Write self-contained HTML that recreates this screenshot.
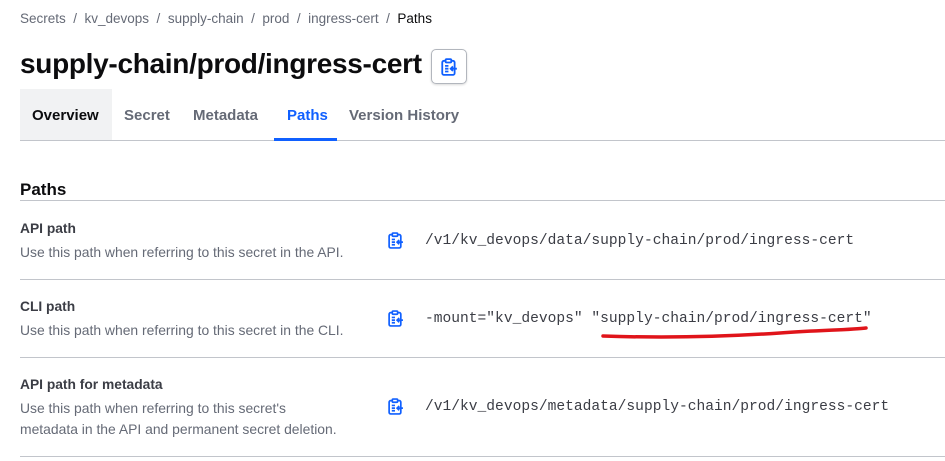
<!DOCTYPE html>
<html><head><meta charset="utf-8"><style>
*{margin:0;padding:0;box-sizing:border-box}
body{width:945px;height:461px;overflow:hidden;background:#fff;font-family:"Liberation Sans",sans-serif;color:#3b3d45;position:relative}
.a{position:absolute;white-space:nowrap}
.bc{top:11px;font-size:13.5px;color:#656a76}
.t{top:48px;left:20px;font-size:28px;font-weight:bold;color:#0c0c0e;letter-spacing:-0.3px}
.btn{left:431px;top:49px;width:36px;height:35px;border:1px solid #b2b6bd;border-radius:5px;box-shadow:0 1px 2px rgba(0,0,0,.15);display:flex;align-items:center;justify-content:center}
.tab{top:107px;font-size:15px;font-weight:bold;color:#656a76}
.line{position:absolute;left:20px;right:0;height:1px;background:#c2c5cb}
.lbl{font-size:13.8px;font-weight:bold;color:#3b3d45}
.d{font-size:13.9px;color:#656a76;line-height:21px}
.m{font-family:"Liberation Mono",monospace;font-size:14.6px;color:#3b3d45}
</style></head><body>
<div class="a bc" style="left:20px">Secrets&nbsp; / &nbsp;kv_devops&nbsp; / &nbsp;supply-chain&nbsp; / &nbsp;prod&nbsp; / &nbsp;ingress-cert&nbsp; / &nbsp;<span style="color:#0c0c0e">Paths</span></div>
<div class="a t">supply-chain/prod/ingress-cert</div>
<div class="a btn"><svg width="18" height="18" viewBox="0 0 16 16" fill="none" stroke="#1060ff" stroke-width="1.6"><rect x="2" y="2.5" width="11" height="12.5" rx="1.5"/><rect x="5" y="1" width="5" height="3" rx=".8" fill="#fff"/><path d="M4.5 7h3M4.5 9.5h3M4.5 12h3M15 9.5H9.5M11.5 7.5l-2 2 2 2"/></svg></div>
<div class="a" style="left:20px;top:89px;width:92px;height:51px;background:#f1f2f3"></div>
<div class="a tab" style="left:32px;color:#0c0c0e">Overview</div>
<div class="a tab" style="left:124px">Secret</div>
<div class="a tab" style="left:193px">Metadata</div>
<div class="a tab" style="left:287px;color:#1060ff">Paths</div>
<div class="a tab" style="left:349px">Version History</div>
<div class="line" style="top:140px"></div>
<div class="a" style="left:274px;top:138px;width:63px;height:3px;background:#1060ff"></div>
<div class="a" style="left:20px;top:180px;font-size:17px;font-weight:bold;color:#0c0c0e">Paths</div>
<div class="line" style="top:200px"></div>

<div class="a lbl" style="left:20px;top:221px">API path</div>
<div class="a d" style="left:20px;top:242px">Use this path when referring to this secret in the API.</div>
<div class="a m" style="left:425px;top:233px">/v1/kv_devops/data/supply-chain/prod/ingress-cert</div>
<div class="line" style="top:279px"></div>

<div class="a lbl" style="left:20px;top:299px">CLI path</div>
<div class="a d" style="left:20px;top:320px">Use this path when referring to this secret in the CLI.</div>
<div class="a m" style="left:425px;top:311px">-mount="kv_devops" "supply-chain/prod/ingress-cert"</div>
<svg class="a" style="left:600px;top:321px" width="270" height="20"><path d="M3 15 C60 17 120 16 180 12 C220 9 250 9 266 7" stroke="#e0141a" stroke-width="3.5" fill="none" stroke-linecap="round"/></svg>
<div class="line" style="top:357px"></div>

<div class="a lbl" style="left:20px;top:377px">API path for metadata</div>
<div class="a d" style="left:20px;top:398px">Use this path when referring to this secret's<br>metadata in the API and permanent secret deletion.</div>
<div class="a m" style="left:425px;top:399px">/v1/kv_devops/metadata/supply-chain/prod/ingress-cert</div>
<div class="line" style="top:456px"></div>

<svg class="a" style="left:387px;top:232px" width="17" height="17" viewBox="0 0 16 16" fill="none" stroke="#1060ff" stroke-width="1.6"><rect x="2" y="2.5" width="11" height="12.5" rx="1.5"/><rect x="5" y="1" width="5" height="3" rx=".8" fill="#fff"/><path d="M4.5 7h3M4.5 9.5h3M4.5 12h3M15 9.5H9.5M11.5 7.5l-2 2 2 2"/></svg>
<svg class="a" style="left:387px;top:310px" width="17" height="17" viewBox="0 0 16 16" fill="none" stroke="#1060ff" stroke-width="1.6"><rect x="2" y="2.5" width="11" height="12.5" rx="1.5"/><rect x="5" y="1" width="5" height="3" rx=".8" fill="#fff"/><path d="M4.5 7h3M4.5 9.5h3M4.5 12h3M15 9.5H9.5M11.5 7.5l-2 2 2 2"/></svg>
<svg class="a" style="left:387px;top:398px" width="17" height="17" viewBox="0 0 16 16" fill="none" stroke="#1060ff" stroke-width="1.6"><rect x="2" y="2.5" width="11" height="12.5" rx="1.5"/><rect x="5" y="1" width="5" height="3" rx=".8" fill="#fff"/><path d="M4.5 7h3M4.5 9.5h3M4.5 12h3M15 9.5H9.5M11.5 7.5l-2 2 2 2"/></svg>
</body></html>
